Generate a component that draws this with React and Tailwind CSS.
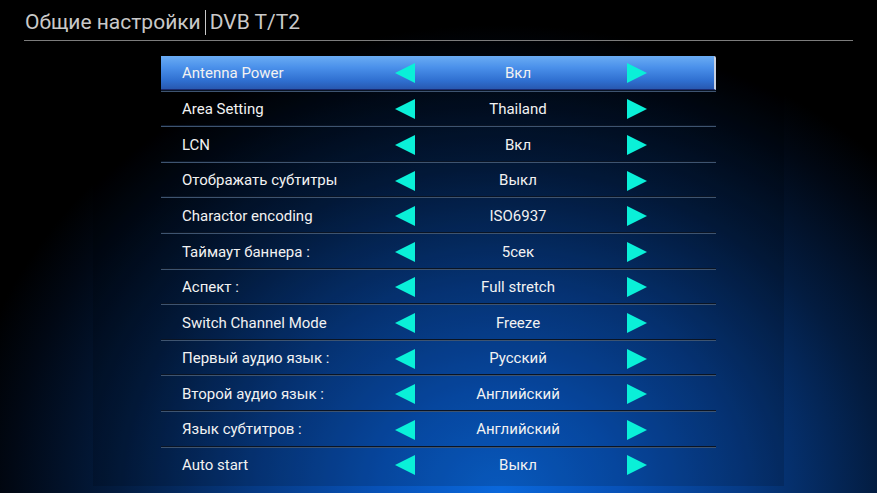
import React from "react";

const rows = [
  ["Antenna Power", "Вкл"],
  ["Area Setting", "Thailand"],
  ["LCN", "Вкл"],
  ["Отображать субтитры", "Выкл"],
  ["Charactor encoding", "ISO6937"],
  ["Таймаут баннера :", "5сек"],
  ["Аспект :", "Full stretch"],
  ["Switch Channel Mode", "Freeze"],
  ["Первый аудио язык :", "Русский"],
  ["Второй аудио язык :", "Английский"],
  ["Язык субтитров :", "Английский"],
  ["Auto start", "Выкл"],
];

function Tri({ dir }) {
  return (
    <svg width="20" height="20" viewBox="0 0 20 20" className="shrink-0">
      {dir === "left" ? (
        <polygon points="20,0 20,20 0,10" fill="#0af0d8" />
      ) : (
        <polygon points="0,0 0,20 20,10" fill="#0af0d8" />
      )}
    </svg>
  );
}

export default function App() {
  return (
    <div
      className="w-[877px] h-[493px] overflow-hidden flex flex-col bg-[radial-gradient(ellipse_62%_95%_at_57%_100%,#0a68dc_0%,#0852b8_22%,#063a84_45%,#031c40_70%,#010814_90%,#000000_100%)]"
      style={{ fontFamily: "Roboto, 'Noto Sans', sans-serif" }}
    >
      <div className="flex items-center h-[40px] pl-[25px] pt-[4px] text-[21px] text-[#c9c9c9] leading-none">
        <span>Общие настройки</span>
        <span className="w-[1px] h-[25px] bg-[#c9c9c9] mx-[4px]"></span>
        <span>DVB T/T2</span>
      </div>
      <div className="ml-[24px] w-[829px] h-[1px] bg-[#7c7c7c]"></div>
      <div className="ml-[93px] w-[691px] h-[445px] bg-[rgba(0,0,0,0.14)] pt-[15px]">
        <div className="ml-[68px] w-[555px] flex flex-col">
          {rows.map(([label, value], i) => (
            <div key={i} className="h-[35.6px] flex flex-col">
              <div
                className={
                  "h-[33.6px] flex items-center pt-[2px] text-[15px] text-[#f2f2f2] " +
                  (i === 0
                    ? "bg-[linear-gradient(180deg,#6aacf4_0%,#4a90ea_35%,#2f6fd0_75%,#2858b0_100%)] border-r-[2px] border-r-[#c8d0e0] border-b border-b-[#1a2a70] rounded-tr-[2px]"
                    : "")
                }
              >
                <div className="w-[234px] pl-[21px] shrink-0">{label}</div>
                <Tri dir="left" />
                <div className="w-[212px] pr-[6px] text-center shrink-0">{value}</div>
                <Tri dir="right" />
              </div>
              {i < rows.length - 1 && (
                <div className="h-[2px] flex flex-col">
                  <div className="h-[1px] bg-[#0a1424]"></div>
                  <div className="h-[1px] bg-[#3e5470]"></div>
                </div>
              )}
            </div>
          ))}
        </div>
      </div>
    </div>
  );
}
